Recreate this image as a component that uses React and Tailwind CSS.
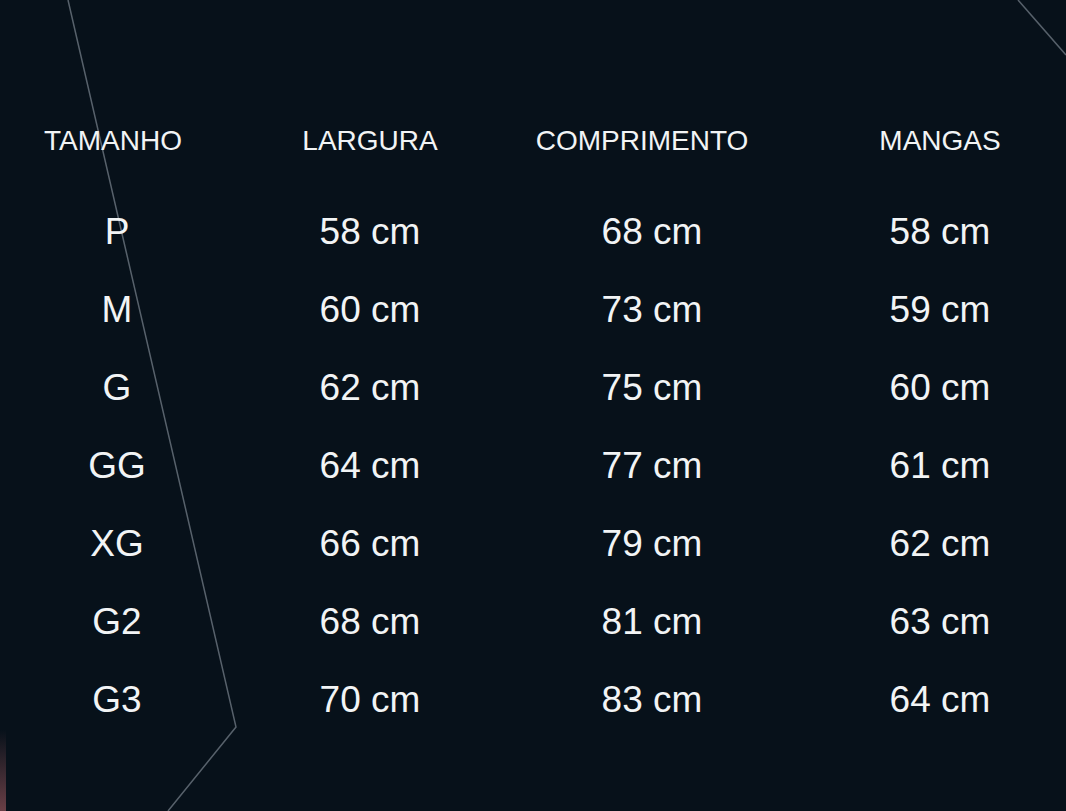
import React from 'react';

const rows = [
  ['P', '58 cm', '68 cm', '58 cm'],
  ['M', '60 cm', '73 cm', '59 cm'],
  ['G', '62 cm', '75 cm', '60 cm'],
  ['GG', '64 cm', '77 cm', '61 cm'],
  ['XG', '66 cm', '79 cm', '62 cm'],
  ['G2', '68 cm', '81 cm', '63 cm'],
  ['G3', '70 cm', '83 cm', '64 cm'],
];

const headers = ['TAMANHO', 'LARGURA', 'COMPRIMENTO', 'MANGAS'];
const headerPad = ['-ml-1', '', 'pr-3', 'pl-7'];
const cellPad = ['pl-1', '', 'pl-2', 'pl-7'];

export default function App() {
  return (
    <div className="relative w-[1066px] h-[811px] overflow-hidden bg-[#07111a] text-[#f2f4f5] font-['Liberation_Sans',Arial,sans-serif]">
      {/* background decoration lines */}
      <svg className="absolute inset-0 pointer-events-none" width="1066" height="811" viewBox="0 0 1066 811">
        <polyline points="68,0 236,727 168,811" fill="none" stroke="#6b7580" strokeOpacity="0.8" strokeWidth="1.5" />
        <line x1="1018" y1="0" x2="1066" y2="55" stroke="#6b7580" strokeOpacity="0.8" strokeWidth="1.5" />
      </svg>
      <div className="absolute left-0 top-[730px] w-[6px] h-[81px] bg-gradient-to-b from-transparent to-[#6a3f46]" />

      <div className="relative pt-[111px]">
        {/* Header */}
        <div className="grid grid-cols-[230px_280px_276px_1fr] h-[60px] items-center text-[28px]">
          {headers.map((h, i) => (
            <div key={h} className={`text-center ${headerPad[i]}`}>{h}</div>
          ))}
        </div>

        {/* Rows */}
        <div className="mt-[22px]">
          {rows.map((r) => (
            <div key={r[0]} className="grid grid-cols-[230px_280px_276px_1fr] h-[78px] items-center text-[37px]">
              {r.map((c, i) => (
                <div key={i} className={`text-center ${cellPad[i]}`}>{c}</div>
              ))}
            </div>
          ))}
        </div>
      </div>
    </div>
  );
}
